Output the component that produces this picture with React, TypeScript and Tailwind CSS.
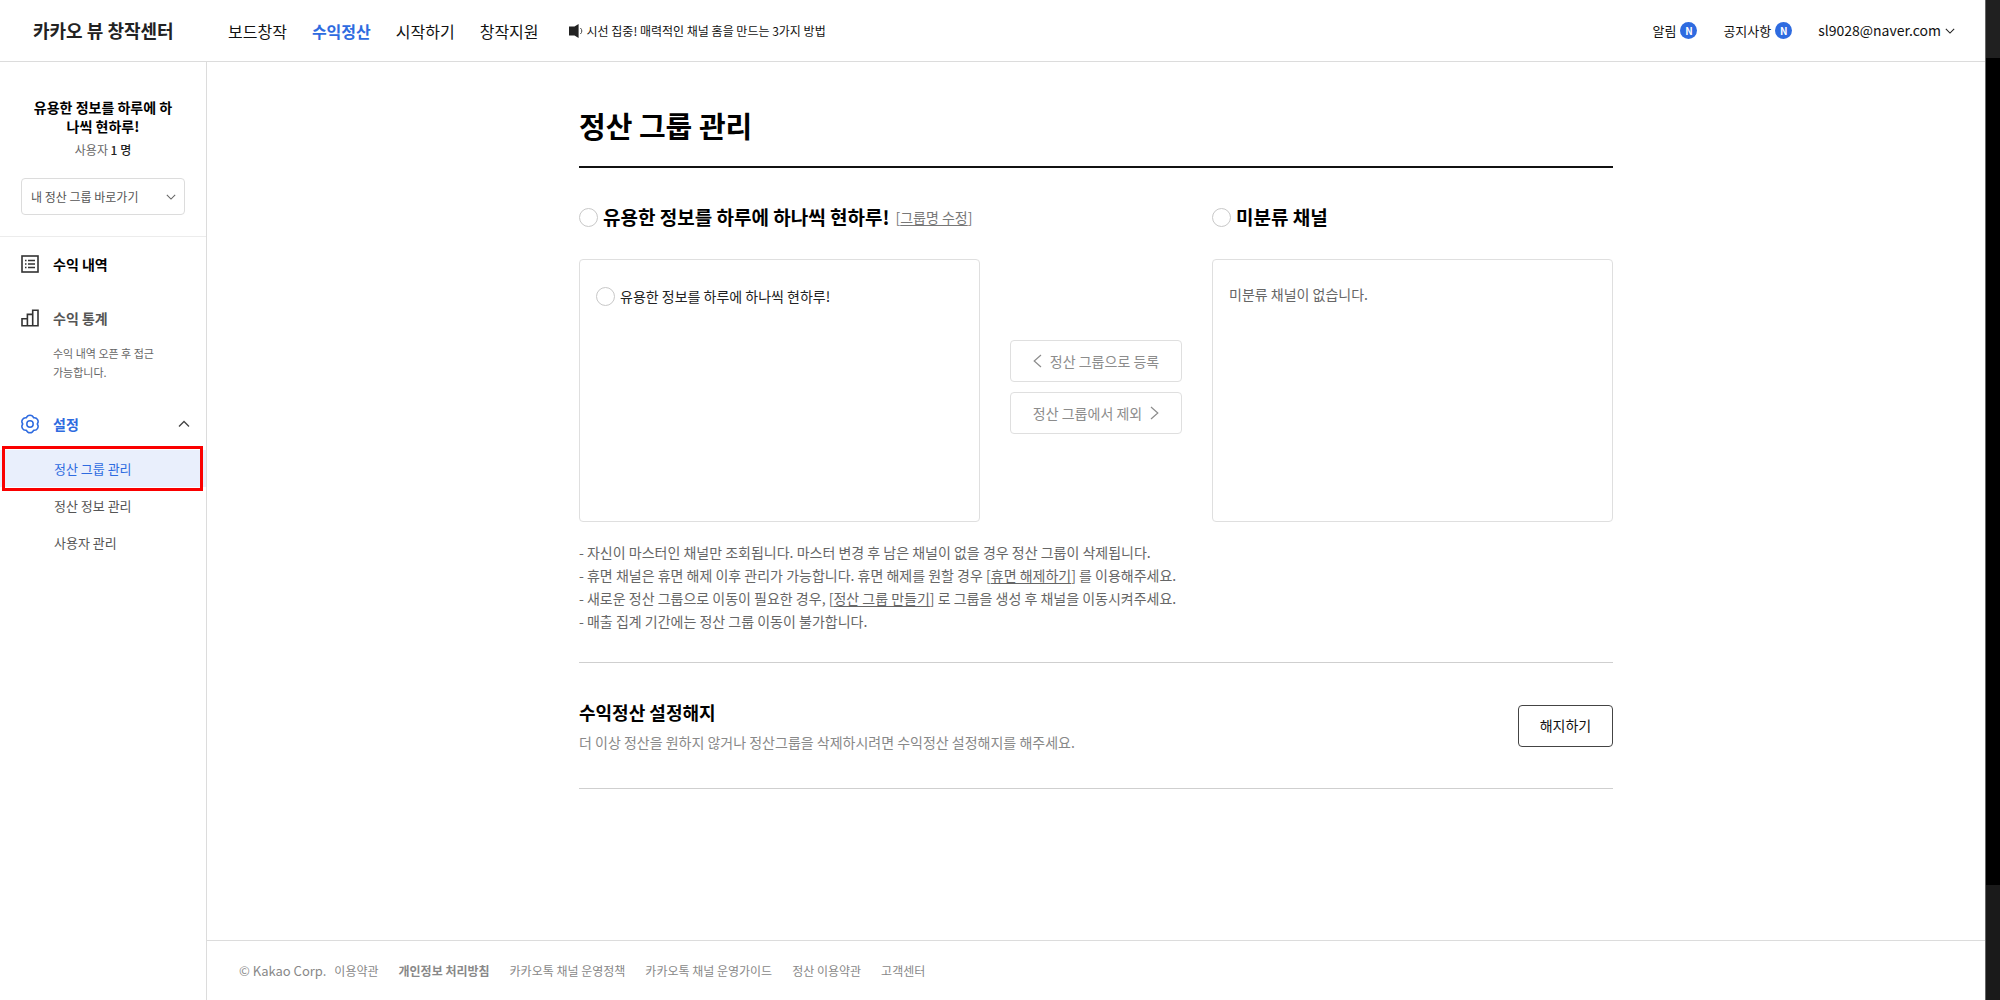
import React, { useState } from 'react';

const navItems = [
  { label: '보드창작', active: false },
  { label: '수익정산', active: true },
  { label: '시작하기', active: false },
  { label: '창작지원', active: false },
];

const settingItems = ['정산 그룹 관리', '정산 정보 관리', '사용자 관리'];

const footerLinks = [
  { label: '이용약관', bold: false },
  { label: '개인정보 처리방침', bold: true },
  { label: '카카오톡 채널 운영정책', bold: false },
  { label: '카카오톡 채널 운영가이드', bold: false },
  { label: '정산 이용약관', bold: false },
  { label: '고객센터', bold: false },
];

const radioClass =
  'h-[19px] w-[19px] shrink-0 appearance-none rounded-full border border-[#c8c8c8] bg-white checked:border-[6px] checked:border-[#2e6be0]';

const SpeakerIcon = () => (
  <svg width="14" height="14" viewBox="0 0 14 14" aria-hidden="true">
    <path d="M0 2.6h5.5L9.6 0v14L5.5 11.4H0z" fill="#222" />
    <path d="M11.4 4c1.9 1.7 1.9 4.3 0 6" fill="none" stroke="#444" strokeWidth="1" />
  </svg>
);

const ListIcon = () => (
  <svg width="18" height="18" viewBox="0 0 18 18" fill="none" stroke="#333" aria-hidden="true">
    <rect x="1" y="1" width="16" height="16" strokeWidth="1.6" />
    <path d="M4 5.5h1.5M4 9h1.5M4 12.5h1.5M7 5.5h7M7 9h7M7 12.5h7" strokeWidth="1.3" />
  </svg>
);

const ChartIcon = () => (
  <svg width="18" height="18" viewBox="0 0 18 18" fill="none" stroke="#333" strokeWidth="1.6" aria-hidden="true">
    <path d="M1 9.7h5.4v7H1zM6.4 5.4h5.3v11.3H6.4zM11.7 1.2H17v15.5h-5.3z" />
  </svg>
);

const GearIcon = () => (
  <svg width="20" height="20" viewBox="0 0 20 20" fill="none" stroke="#2e6be0" strokeWidth="1.5" aria-hidden="true">
    <path
      d="M17.2 10A3.8 3.8 0 0 1 13.6 16.2A3.8 3.8 0 0 1 6.4 16.2A3.8 3.8 0 0 1 2.8 10A3.8 3.8 0 0 1 6.4 3.8A3.8 3.8 0 0 1 13.6 3.8A3.8 3.8 0 0 1 17.2 10z"
      strokeLinejoin="round"
    />
    <circle cx="10" cy="10" r="3.2" />
  </svg>
);

// points down unless a class turns it
const Chevron = ({ className }: { className: string }) => (
  <svg width="12" height="12" viewBox="0 0 12 12" fill="none" stroke="currentColor" strokeWidth="1.3" className={className} aria-hidden="true">
    <path d="M1 3.5l5 5 5-5" />
  </svg>
);

// taller arrow for the move buttons, points left
const Arrow = ({ className = '' }: { className?: string }) => (
  <svg width="9" height="14" viewBox="0 0 9 14" fill="none" stroke="currentColor" strokeWidth="1.2" className={className} aria-hidden="true">
    <path d="M8 1L1.2 7 8 13" />
  </svg>
);

const NewBadge = () => (
  <span className="flex h-[17px] w-[17px] items-center justify-center rounded-full bg-[#2e6be0] text-[10px] leading-none font-bold text-white">
    N
  </span>
);

const Header = () => (
  <header className="flex h-[62px] items-center border-b border-[#dcdcdc] pr-[30px] pl-[33px]">
    <a href="#" className="w-[195px] text-[18px] font-bold text-[#222]">카카오 뷰 창작센터</a>
    <nav className="flex gap-[25px]">
      {navItems.map(n => (
        <a
          key={n.label}
          href="#"
          className={n.active ? 'text-[16px] font-bold text-[#2e6be0]' : 'text-[16px] text-[#111]'}
        >
          {n.label}
        </a>
      ))}
    </nav>
    <a href="#" className="ml-[30px] flex items-center gap-1 text-[12px] text-[#111]">
      <SpeakerIcon />
      시선 집중! 매력적인 채널 홈을 만드는 3가지 방법
    </a>
    <div className="ml-auto flex items-center gap-[26px] text-[13px] text-[#111]">
      <a href="#" className="flex items-center gap-1">알림 <NewBadge /></a>
      <a href="#" className="flex items-center gap-1">공지사항 <NewBadge /></a>
      <button type="button" className="flex items-center gap-1 text-[14px]">
        sl9028@naver.com <Chevron className="h-[10px] w-[10px] text-[#222]" />
      </button>
    </div>
  </header>
);

const Sidebar = () => {
  const [open, setOpen] = useState(true);

  return (
    <aside className="w-[207px] shrink-0 border-r border-[#dcdcdc]">
      <div className="border-b border-[#ececec] px-[21px] pt-9 pb-[21px] text-center">
        <h2 className="mx-auto w-[140px] text-[14px] leading-[19px] font-bold break-all text-black">
          유용한 정보를 하루에 하나씩 현하루!
        </h2>
        <p className="mt-1 text-[12px] leading-[19px] text-[#666]">
          사용자 <span className="font-medium text-[#222]">1 명</span>
        </p>
        <div className="relative mt-[19px]">
          <select
            aria-label="정산 그룹 바로가기"
            className="h-[37px] w-full appearance-none rounded border border-[#dcdcdc] bg-white px-[9px] text-[12px] text-[#555]"
          >
            <option>내 정산 그룹 바로가기</option>
          </select>
          <Chevron className="pointer-events-none absolute top-[14px] right-[9px] h-[10px] w-[10px] text-[#666]" />
        </div>
      </div>

      <nav className="text-[14px] leading-5">
        <a href="#" className="mt-[17px] flex items-center gap-3 pl-[21px] font-bold text-black">
          <span className="w-5"><ListIcon /></span>
          수익 내역
        </a>
        <a href="#" className="mt-[34px] flex items-center gap-3 pl-[21px] font-bold text-[#555]">
          <span className="w-5"><ChartIcon /></span>
          수익 통계
        </a>
        <p className="mt-4 w-[165px] pl-[53px] text-[11px] leading-[19px] break-keep text-[#666]">수익 내역 오픈 후 접근 가능합니다.</p>
        <button
          type="button"
          onClick={() => setOpen(!open)}
          className="mt-8 flex w-full items-center gap-[13px] pr-4 pl-5 font-bold text-[#2e6be0]"
        >
          <GearIcon />
          설정
          <Chevron className={open ? 'ml-auto rotate-180 text-[#444]' : 'ml-auto text-[#444]'} />
        </button>
        {open && (
          <ul className="mt-4 text-[13px]">
            {settingItems.map((s, i) => (
              <li key={s} className={i === 0 ? 'relative bg-[#e9effc] text-[#2e6be0]' : 'text-[#555]'}>
                <a href="#" className="flex h-[37px] items-center pl-[54px]">{s}</a>
                {i === 0 && (
                  <span className="pointer-events-none absolute -inset-y-1 right-[3px] left-[2px] border-[3px] border-[#fa0000]" />
                )}
              </li>
            ))}
          </ul>
        )}
      </nav>
    </aside>
  );
};

const GroupManager = () => {
  const [target, setTarget] = useState('');
  const box = 'h-[263px] rounded border border-[#dfdfdf]';
  const moveButton =
    'flex h-[42px] w-[172px] items-center justify-center gap-2 rounded border border-[#dfdfdf] text-[14px] text-[#8c8c8c]';

  return (
    <div className="grid grid-cols-[401px_1fr_401px]">
      <section>
        <div className="flex h-[26px] items-center">
          <label className="flex items-center gap-[5px] text-[19px] font-bold text-black">
            <input type="radio" name="target" checked={target === 'group'} onChange={() => setTarget('group')} className={radioClass} />
            유용한 정보를 하루에 하나씩 현하루!
          </label>
          <span className="ml-[6px] text-[14px] text-[#777]">
            [<a href="#" className="underline underline-offset-2">그룹명 수정</a>]
          </span>
        </div>
        <div className={`mt-[29px] px-4 pt-[26px] ${box}`}>
          <label className="flex items-center gap-[5px] text-[14px] leading-5 text-[#222]">
            <input type="radio" name="target" checked={target === 'channel'} onChange={() => setTarget('channel')} className={radioClass} />
            유용한 정보를 하루에 하나씩 현하루!
          </label>
        </div>
      </section>

      <div className="mt-[136px] flex flex-col items-center gap-[10px]">
        <button type="button" className={moveButton}>
          <Arrow />
          정산 그룹으로 등록
        </button>
        <button type="button" className={moveButton}>
          정산 그룹에서 제외
          <Arrow className="rotate-180" />
        </button>
      </div>

      <section>
        <label className="flex h-[26px] items-center gap-[5px] text-[19px] font-bold text-black">
          <input type="radio" name="target" checked={target === 'none'} onChange={() => setTarget('none')} className={radioClass} />
          미분류 채널
        </label>
        <div className={`mt-[29px] px-4 pt-6 text-[14px] leading-5 text-[#666] ${box}`}>미분류 채널이 없습니다.</div>
      </section>
    </div>
  );
};

const App: React.FC = () => (
  <div className="flex min-h-screen bg-white font-['Noto_Sans_CJK_KR','Noto_Sans',sans-serif]">
    <div className="flex min-w-0 flex-1 flex-col">
      <Header />
      <div className="flex flex-1">
        <Sidebar />
        <div className="flex min-w-0 flex-1 flex-col">
          <main className="mx-auto w-full max-w-[1034px] flex-1">
            <h1 className="mt-[43px] border-b-2 border-[#111] pb-[21px] text-[29px] leading-10 font-bold text-black">정산 그룹 관리</h1>
            <div className="mt-9">
              <GroupManager />
            </div>
            <ul className="mt-[19px] text-[14px] leading-[23px] text-[#666]">
              <li>- 자신이 마스터인 채널만 조회됩니다. 마스터 변경 후 남은 채널이 없을 경우 정산 그룹이 삭제됩니다.</li>
              <li>
                - 휴면 채널은 휴면 해제 이후 관리가 가능합니다. 휴면 해제를 원할 경우 [
                <a href="#" className="underline underline-offset-2">휴면 해제하기</a>] 를 이용해주세요.
              </li>
              <li>
                - 새로운 정산 그룹으로 이동이 필요한 경우, [
                <a href="#" className="underline underline-offset-2">정산 그룹 만들기</a>] 로 그룹을 생성 후 채널을 이동시켜주세요.
              </li>
              <li>- 매출 집계 기간에는 정산 그룹 이동이 불가합니다.</li>
            </ul>
            <section className="mt-[29px] flex h-[127px] items-center justify-between border-y border-[#cfcfcf]">
              <div>
                <h2 className="text-[18px] leading-8 font-bold text-black">수익정산 설정해지</h2>
                <p className="text-[14px] leading-7 text-[#888]">
                  더 이상 정산을 원하지 않거나 정산그룹을 삭제하시려면 수익정산 설정해지를 해주세요.
                </p>
              </div>
              <button type="button" className="h-[42px] w-[95px] rounded border border-[#444] text-[14px] text-[#111]">
                해지하기
              </button>
            </section>
          </main>
          <footer className="flex h-[60px] items-center border-t border-[#dcdcdc] pl-8 text-[12px] text-[#888]">
            <span className="mr-2 text-[13px]">© Kakao Corp.</span>
            <div className="flex gap-5">
              {footerLinks.map(f => (
                <a key={f.label} href="#" className={f.bold ? 'font-bold' : ''}>{f.label}</a>
              ))}
            </div>
          </footer>
        </div>
      </div>
    </div>

    {/* dark strip on the right edge */}
    <div className="flex w-[15px] shrink-0 flex-col border-l border-[#666] bg-black">
      <div className="h-[58px] bg-[#202020]" />
      <div className="mt-auto h-[115px] bg-[#1a1a1a]" />
    </div>
  </div>
);

export default App;
